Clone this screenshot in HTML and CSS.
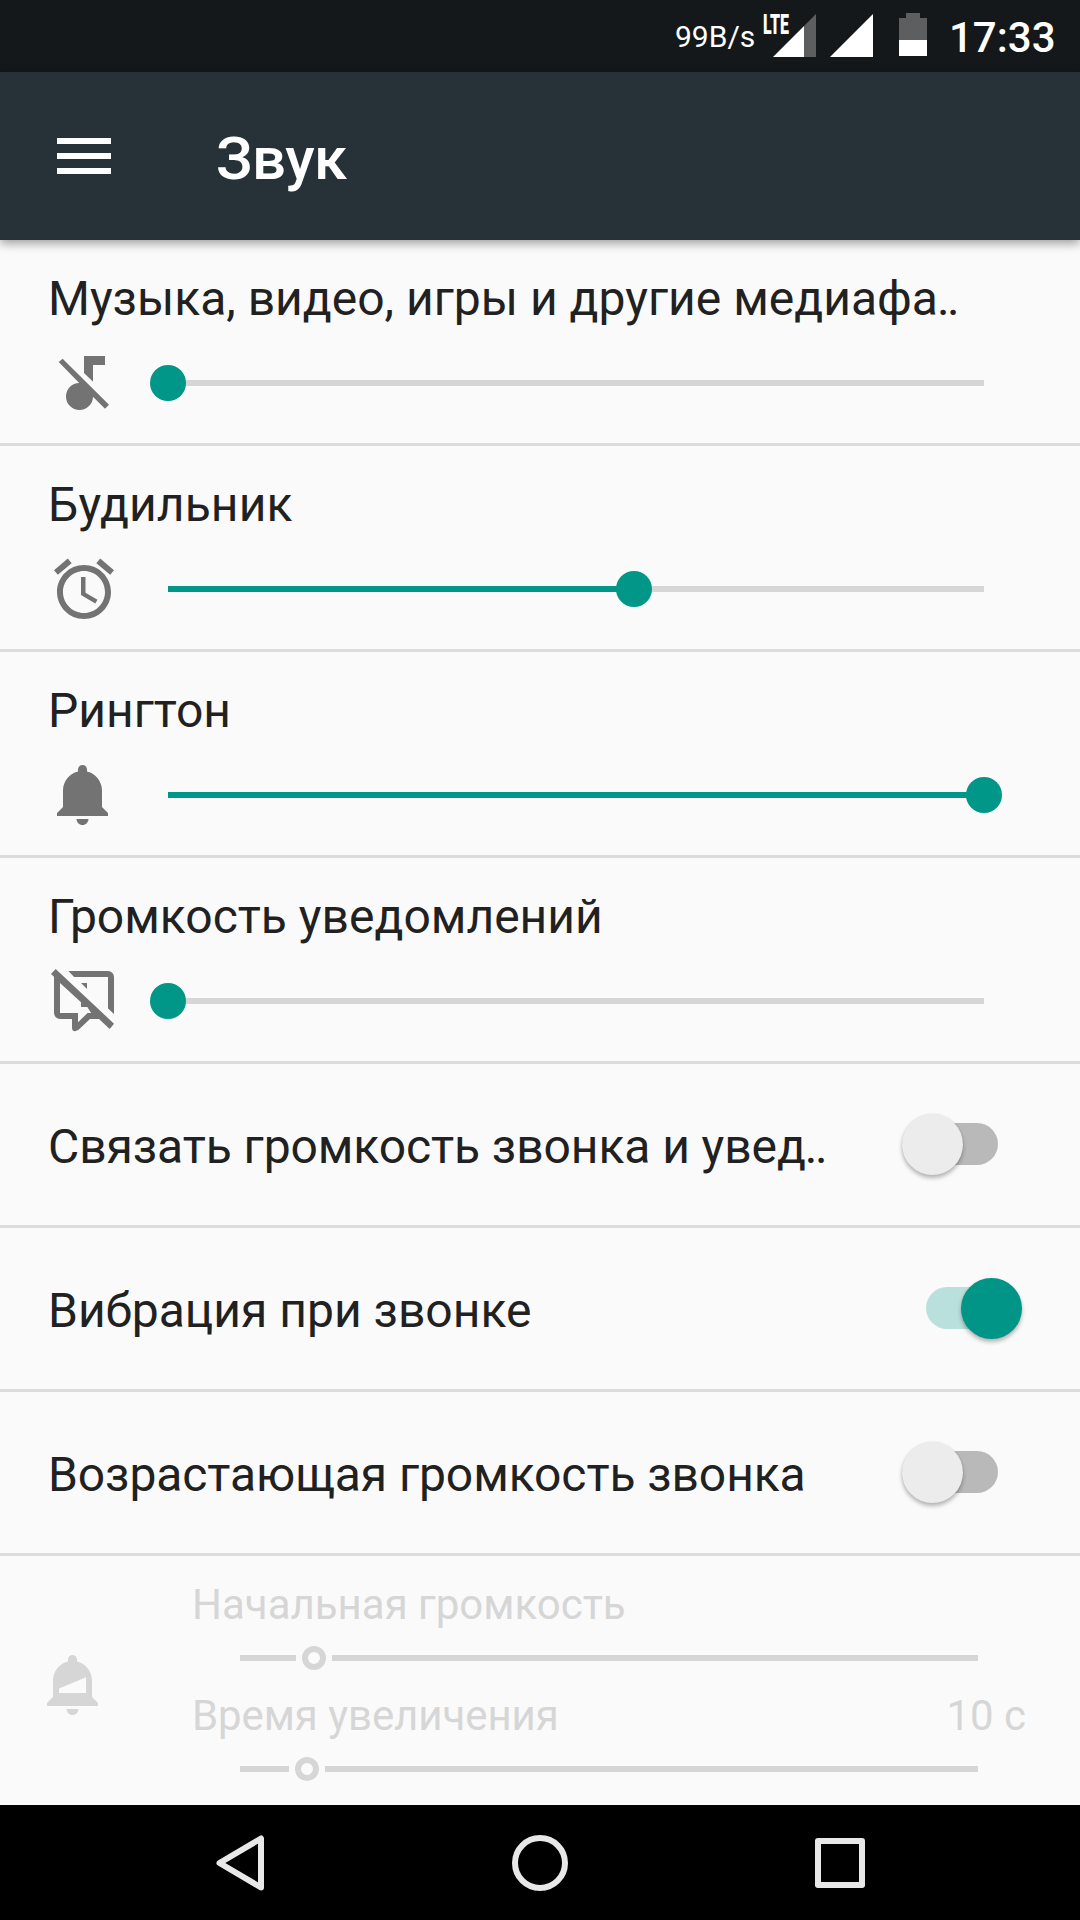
FILE: index.html
```html
<!DOCTYPE html>
<html lang="ru">
<head>
<meta charset="utf-8">
<title>Звук</title>
<link rel="stylesheet" href="styles.css">
</head>
<body>
<div class="screen">
  <div class="status-bar">
    <span class="net-speed">99B/s</span>
    <span class="lte-badge">LTE</span>
    <svg class="signal" width="43" height="43" viewBox="0 0 43 43"><path d="M0 43L31 12V43z" fill="#fff"/><path d="M31 12L43 0V43H31z" fill="#5c5e60"/></svg>
    <svg class="signal signal-full" width="43" height="43" viewBox="0 0 43 43"><path d="M0 43L43 0V43z" fill="#fff"/></svg>
    <svg class="battery" width="28" height="43" viewBox="0 0 28 43"><path d="M7 0h14v5h7v22H0V5h7z" fill="#5c5e60"/><path d="M0 27h28v16H0z" fill="#fff"/></svg>
    <span class="clock">17:33</span>
  </div>

  <header class="app-bar">
    <svg class="menu-icon" width="54" height="36" viewBox="0 0 54 36"><path d="M0 0h54v6H0zM0 15h54v6H0zM0 30h54v6H0z" fill="#fff"/></svg>
    <h1 class="app-title">Звук</h1>
  </header>

  <main class="settings">
    <section class="volume-row">
      <div class="label">Музыка, видео, игры и другие медиафа<span class="dots">..</span></div>
      <div class="control">
        <svg class="icon" viewBox="0 0 24 24"><path d="M12 3v5.67l3 2.9V6h4V3zM4.89 3.89L20.33 19.22 19 20.56 15 16.56A4.5 4.5 0 1 1 10.4 12L3.56 5z"/></svg>
        <div class="slider"><div class="fill" style="width:0%"></div><div class="thumb" style="left:0%"></div></div>
      </div>
    </section>
    <section class="volume-row">
      <div class="label wide">Будильник</div>
      <div class="control">
        <svg class="icon" viewBox="0 0 24 24"><path d="M22 5.72l-4.6-3.86-1.29 1.53 4.6 3.86L22 5.72zM7.88 3.39L6.6 1.86 2 5.71l1.29 1.53 4.59-3.85zM12.5 8H11v6l4.75 2.85.75-1.23-4-2.37V8zM12 4c-4.97 0-9 4.03-9 9s4.02 9 9 9c4.97 0 9-4.03 9-9s-4.03-9-9-9zm0 16c-3.87 0-7-3.13-7-7s3.13-7 7-7 7 3.13 7 7-3.13 7-7 7z"/></svg>
        <div class="slider"><div class="fill" style="width:57.14%"></div><div class="thumb" style="left:57.14%"></div></div>
      </div>
    </section>
    <section class="volume-row">
      <div class="label">Рингтон</div>
      <div class="control">
        <svg class="icon" viewBox="0 0 24 24"><path d="M11.5 22c1.1 0 2-.9 2-2h-4c0 1.1.9 2 2 2zm6.5-6v-5.5c0-3.07-2.13-5.64-5-6.32V3.5c0-.83-.67-1.5-1.5-1.5S10 2.67 10 3.5v.68c-2.87.68-5 3.25-5 6.32V16l-2 2v1h17v-1l-2-2z"/></svg>
        <div class="slider"><div class="fill" style="width:100%"></div><div class="thumb" style="left:100%"></div></div>
      </div>
    </section>
    <section class="volume-row">
      <div class="label">Громкость уведомлений</div>
      <div class="control">
        <svg class="icon" viewBox="0 0 24 24"><path d="M6.78 2H20a2 2 0 0 1 2 2V16.3l-2-1.8V4H8.7z"/><path d="M11 6h2v2z"/><path d="M2.56 1.33L22 19.56 20.56 21.33 17 18H14L10.1 21.7Q8 22.7 8 20.8V18H4a2 2 0 0 1-2-2V3.95L1 3zM4 6v10h6v3.1L13.2 16h1.2L13.1 14H11V12.4z"/></svg>
        <div class="slider"><div class="fill" style="width:0%"></div><div class="thumb" style="left:0%"></div></div>
      </div>
    </section>

    <section class="toggle-row">
      <span class="toggle-label tight">Связать громкость звонка и увед<span class="dots">..</span></span>
      <div class="switch"><div class="knob"></div></div>
    </section>
    <section class="toggle-row">
      <span class="toggle-label">Вибрация при звонке</span>
      <div class="switch on"><div class="knob"></div></div>
    </section>
    <section class="toggle-row">
      <span class="toggle-label tight">Возрастающая громкость звонка</span>
      <div class="switch"><div class="knob"></div></div>
    </section>

    <section class="ramp-row">
      <svg class="ramp-icon" viewBox="0 0 24 24"><path fill-rule="evenodd" d="M11.5 22c1.1 0 2-.9 2-2h-4c0 1.1.9 2 2 2zm6.5-6v-5.5c0-3.07-2.13-5.64-5-6.32V3.5c0-.83-.67-1.5-1.5-1.5S10 2.67 10 3.5v.68c-2.87.68-5 3.25-5 6.32V16l-2 2v1h17v-1l-2-2zM7 13.2l9-3.75v5.2H7z"/></svg>
      <div class="ramp-body">
        <div class="ramp-label"><span>Начальная громкость</span></div>
        <div class="ramp-slider"><div class="seg" style="width:56px"></div><div class="ring"></div><div class="seg rest"></div></div>
        <div class="ramp-label second"><span class="tight">Время увеличения</span><span>10 с</span></div>
        <div class="ramp-slider"><div class="seg" style="width:49px"></div><div class="ring"></div><div class="seg rest"></div></div>
      </div>
    </section>
  </main>

  <nav class="nav-bar">
    <svg width="60" height="60" viewBox="0 0 60 60"><path d="M51 5.500V54.500L9.500 30z"/></svg>
    <svg width="60" height="60" viewBox="0 0 60 60"><circle cx="30" cy="30" r="25"/></svg>
    <svg width="60" height="60" viewBox="0 0 60 60"><rect x="8" y="8" width="44" height="44"/></svg>
  </nav>
</div>
</body>
</html>
```
FILE: styles.css
```css
* { box-sizing: border-box; }

body {
  margin: 0;
  font-family: Roboto, sans-serif;
  background: #fafafa;
  color: #212121;
}

.screen {
  width: 1080px;
  height: 1920px;
  display: flex;
  flex-direction: column;
  overflow: hidden;
  white-space: nowrap;
}

.status-bar {
  height: 72px;
  flex: none;
  background: #14181b;
  color: #fff;
  display: flex;
  align-items: flex-start;
  padding-left: 675px;
}

.net-speed {
  width: 88px;
  font-size: 30px;
  line-height: 36px;
  margin-top: 19px;
}

.lte-badge {
  width: 10px;
  font-size: 27px;
  line-height: 30px;
  margin-top: 10px;
  font-weight: 900;
  transform: scaleX(.59);
  transform-origin: left;
}

.signal { margin-top: 14px; flex: none; }
.signal-full { margin-left: 14px; }
.battery { margin: 13px 0 0 26px; flex: none; }

.clock {
  margin: 13px 0 0 22px;
  font-size: 42px;
  line-height: 50px;
  font-weight: 500;
}

.app-bar {
  height: 168px;
  flex: none;
  background: #263238;
  display: flex;
  align-items: flex-start;
  padding-left: 57px;
  box-shadow: 0 3px 10px rgba(0, 0, 0, .4);
  z-index: 1;
}

.menu-icon { margin-top: 66px; }

.app-title {
  margin: 51px 0 0 105px;
  font-size: 60px;
  line-height: 72px;
  font-weight: 500;
  letter-spacing: -.5px;
  color: #fff;
}

.settings { flex: 1; }

.volume-row {
  height: 206px;
  padding: 31px 0 0 48px;
  border-bottom: 3px solid #dbdbdb;
}

.label {
  font-size: 48px;
  line-height: 56px;
}

.tight { letter-spacing: -.08px; }
.wide { letter-spacing: .12px; }

.dots { letter-spacing: -2.6px; margin-left: -1px; }

.control {
  display: flex;
  align-items: center;
  gap: 48px;
  margin-top: 20px;
}

.icon {
  width: 72px;
  height: 72px;
  fill: #737373;
}

.slider {
  position: relative;
  width: 816px;
  height: 6px;
  background: #d6d6d6;
}

.fill { height: 6px; background: #009688; }

.thumb {
  position: absolute;
  top: -15px;
  width: 36px;
  height: 36px;
  margin-left: -18px;
  border-radius: 50%;
  background: #009688;
}

.toggle-row {
  height: 164px;
  display: flex;
  align-items: center;
  justify-content: space-between;
  padding: 0 58px 0 48px;
  border-bottom: 3px solid #dbdbdb;
}

.toggle-label {
  font-size: 48px;
  line-height: 56px;
  padding-top: 4px;
}

.switch {
  position: relative;
  width: 72px;
  height: 42px;
  margin: 0 24px 1px 0;
  border-radius: 21px;
  background: #b9b9b9;
}

.switch.on { background: #b9e0dc; }

.knob {
  position: absolute;
  left: -24px;
  top: -9px;
  width: 61px;
  height: 61px;
  border-radius: 50%;
  background: #ececec;
  box-shadow: 0 3px 4px rgba(0, 0, 0, .28), 0 0 2px rgba(0, 0, 0, .08);
}

.on .knob { left: 35px; background: #009587; }

.ramp-row {
  height: 249px;
  display: flex;
  padding: 24px 54px 0 37.5px;
  color: #d6d6d6;
}

.ramp-icon {
  width: 72px;
  height: 72px;
  margin-top: 69px;
  fill: #d6d6d6;
}

.ramp-body { flex: 1; margin-left: 82.5px; }

.ramp-label {
  display: flex;
  justify-content: space-between;
  font-size: 42px;
  line-height: 50px;
}

.ramp-label.second { margin-top: 5px; }

.ramp-slider {
  height: 56px;
  margin: 0 48px;
  display: flex;
  align-items: center;
  gap: 6px;
}

.seg { height: 6px; background: #d6d6d6; }
.rest { flex: 1; }

.ring {
  width: 24px;
  height: 24px;
  border: 6px solid #d6d6d6;
  border-radius: 50%;
}

.nav-bar {
  height: 115px;
  flex: none;
  background: #000;
  display: flex;
  align-items: center;
  justify-content: center;
  gap: 240px;
}

.nav-bar svg {
  fill: none;
  stroke: #e8e8e8;
  stroke-width: 6;
  stroke-linejoin: round;
}
```
